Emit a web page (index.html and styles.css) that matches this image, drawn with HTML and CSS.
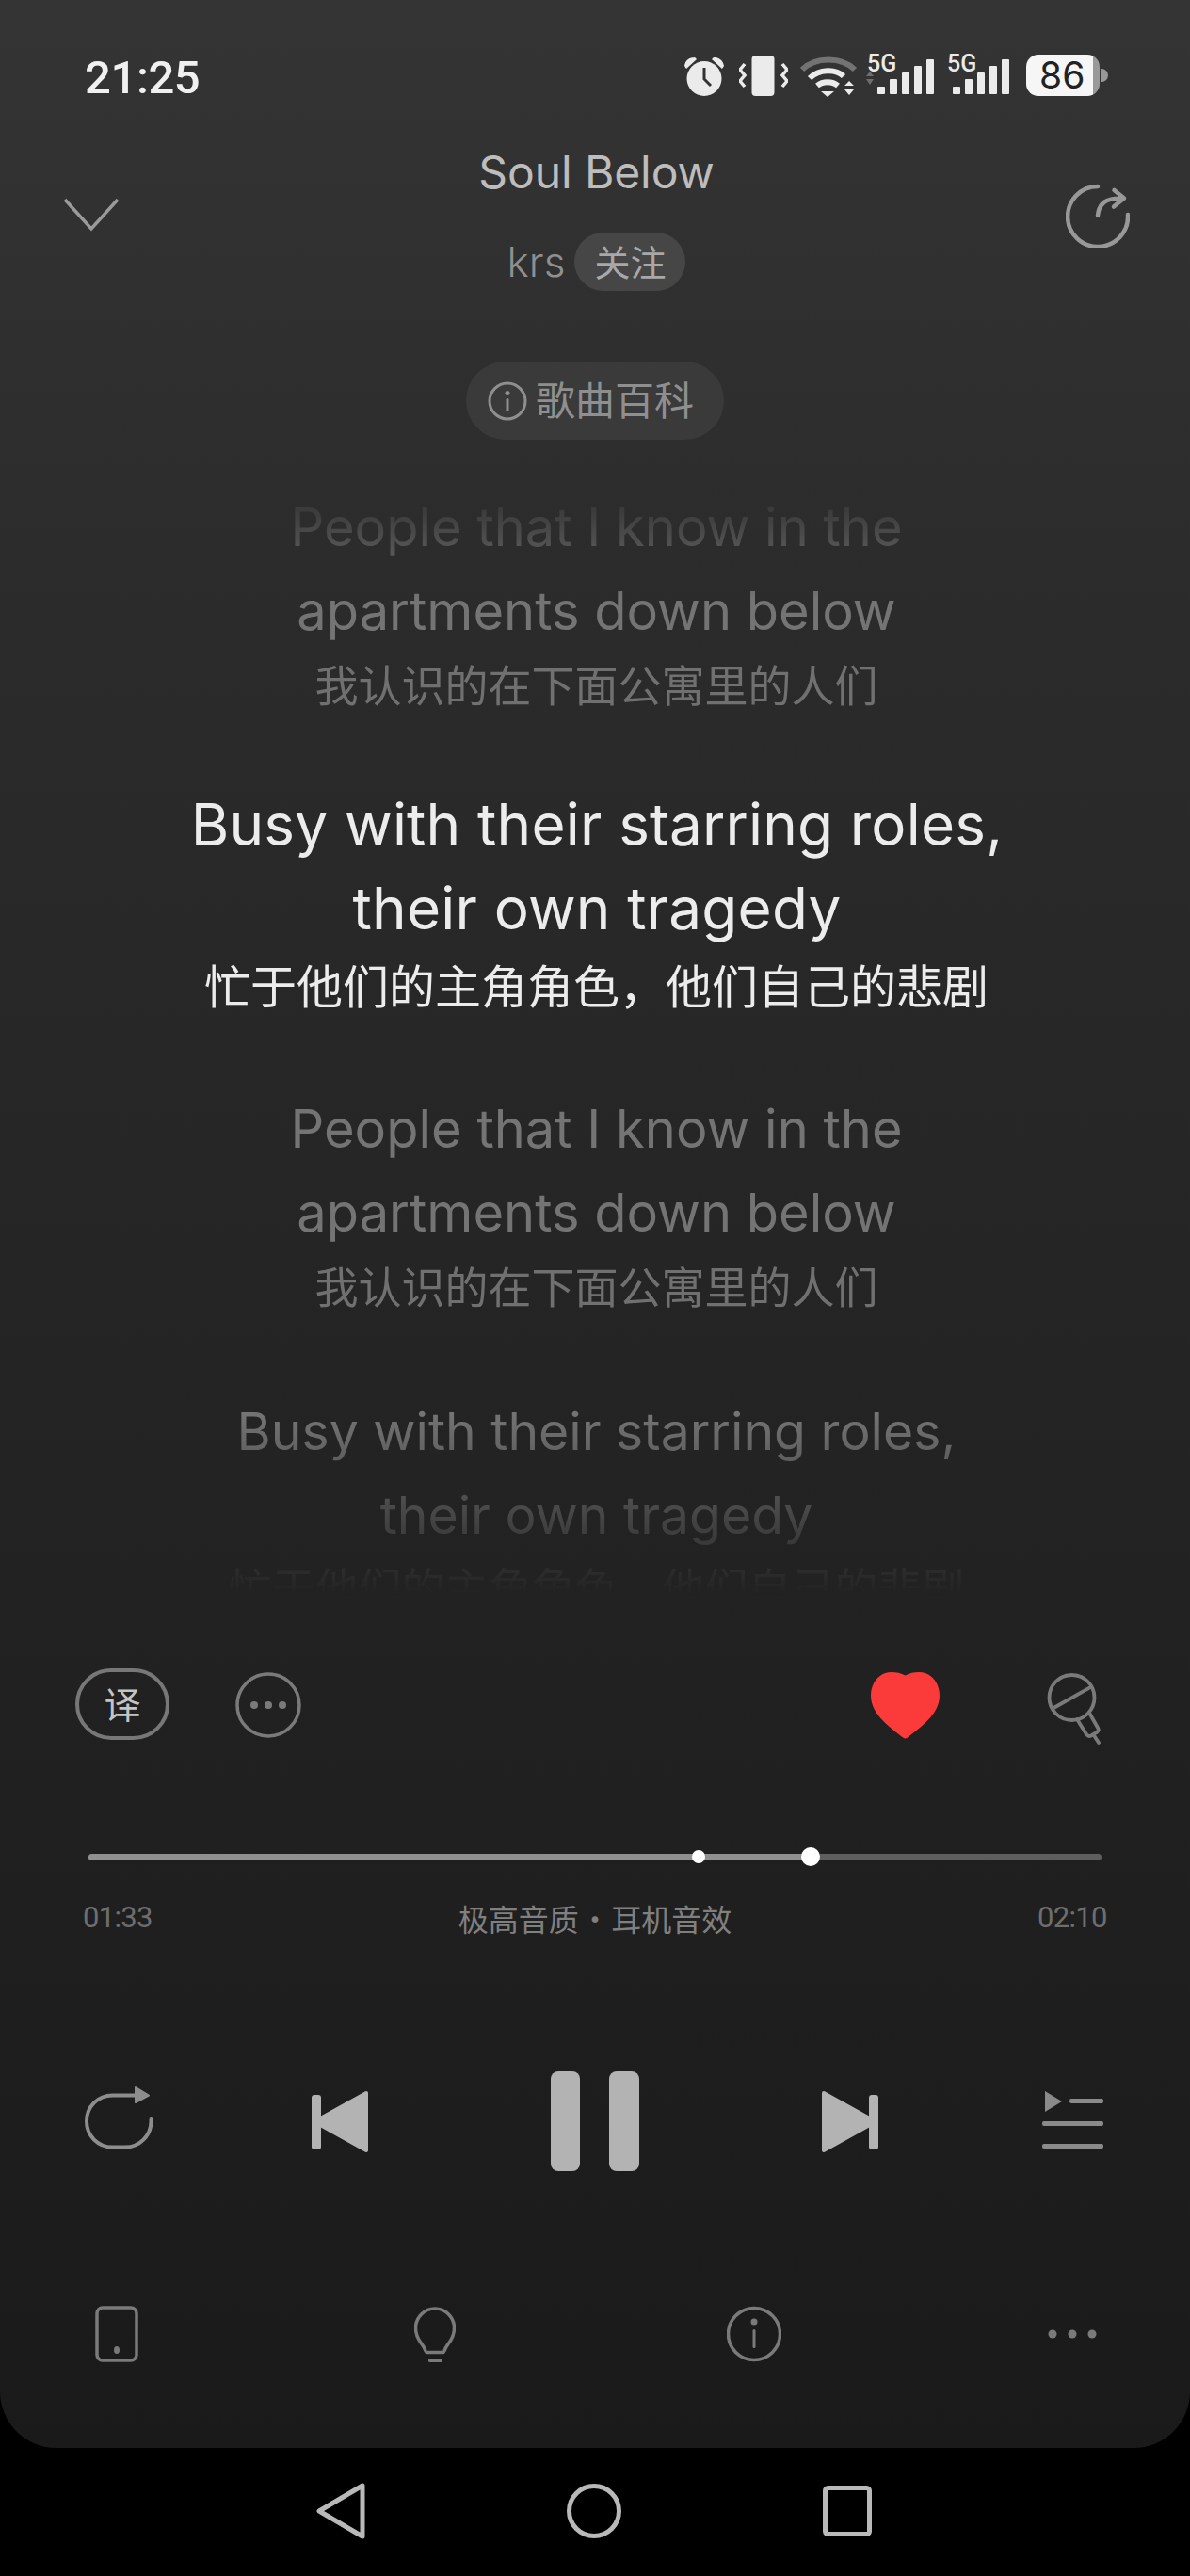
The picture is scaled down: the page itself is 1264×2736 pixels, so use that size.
FILE: index.html
```html
<!DOCTYPE html>
<html lang="zh">
<head>
<meta charset="utf-8">
<title>Soul Below</title>
<link rel="stylesheet" href="styles.css">
</head>
<body>
<div class="screen">
  <main class="player">
    <div class="status">
      <span class="clock">21:25</span>
      <div class="status-icons">
        <svg class="i-alarm" width="44" height="42" viewBox="0 0 44 42"><circle cx="22" cy="23.500" r="18.500" fill="#ebebeb"/><path d="M22 12V24L29 31" fill="none" stroke="#333" stroke-width="3"/><path d="M1 10C2 4 6 1 12 1L14 3 3 13ZM43 10C42 4 38 1 32 1L30 3 41 13Z" fill="#ebebeb"/></svg>
        <svg class="i-vib" width="52" height="43" viewBox="0 0 52 43"><rect x="13.500" y="0" width="24" height="43" rx="4" fill="#ebebeb"/><path d="M6 9L1 15 6 21 1 27 6 33M46 9L51 15 46 21 51 27 46 33" fill="none" stroke="#ebebeb" stroke-width="3.500"/></svg>
        <svg class="i-wifi" width="60" height="44" viewBox="0 0 60 44"><path d="M2 14C16 0 44 0 58 14" fill="none" stroke="#737373" stroke-width="6"/><path d="M10 23C20 13 38 13 46 21" fill="none" stroke="#ebebeb" stroke-width="6"/><path d="M18 31C24 26 34 26 40 31" fill="none" stroke="#ebebeb" stroke-width="6"/><path d="M22 37H36L29 43Z" fill="#ebebeb"/><path d="M47 31L52 26 57 31ZM47 35H57L52 41Z" fill="#ebebeb"/></svg>
        <div class="sim">
          <span class="sim-label">5G</span>
          <svg class="sim-bars" width="72" height="37" viewBox="0 0 72 37"><path d="M0 18L4 13 8 18ZM0 21H8L4 27Z" fill="#6e6e6e"/><g fill="#ebebeb"><rect x="12" y="29" width="8" height="8" rx="1"/><rect x="25" y="21" width="8" height="16" rx="1"/><rect x="38" y="14" width="8" height="23" rx="1"/><rect x="51" y="7" width="8" height="30" rx="1"/><rect x="64" y="0" width="8" height="37" rx="1"/></g></svg>
        </div>
        <div class="sim sim-b">
          <span class="sim-label">5G</span>
          <svg class="sim-bars" width="60" height="37" viewBox="0 0 60 37"><g fill="#ebebeb"><rect x="0" y="29" width="8" height="8" rx="1"/><rect x="13" y="21" width="8" height="16" rx="1"/><rect x="26" y="14" width="8" height="23" rx="1"/><rect x="39" y="7" width="8" height="30" rx="1"/><rect x="52" y="0" width="8" height="37" rx="1"/></g></svg>
        </div>
        <div class="battery"><div class="battery-body"><span class="battery-num">86</span></div><span class="battery-nub"></span></div>
      </div>
    </div>

    <header class="header">
      <svg class="chevron" width="60" height="36" viewBox="0 0 60 36"><path d="M2 2L30 33 58 2" fill="none" stroke="#9a9a9a" stroke-width="3.500"/></svg>
      <div class="song">
        <h1 class="song-title">Soul Below</h1>
        <div class="artist-row"><span class="artist">krs</span><span class="follow">关注</span></div>
      </div>
      <svg class="share" width="68" height="68" viewBox="0 0 68 68"><path d="M34 3A32 32 0 1 0 66 33" fill="none" stroke="#989898" stroke-width="4.500" stroke-linecap="round"/><path d="M34 34C35 23 41 17 52 16H60M51.500 7L62 15.500 51 24.500" fill="none" stroke="#989898" stroke-width="4.500" stroke-linecap="round" stroke-linejoin="round"/></svg>
    </header>

    <div class="wiki-wrap">
      <div class="wiki">
        <svg width="42" height="42" viewBox="0 0 42 42"><circle cx="21" cy="21" r="19" fill="none" stroke="#8f8f8f" stroke-width="3"/><circle cx="21" cy="12.500" r="2.500" fill="#8f8f8f"/><rect x="19.500" y="18" width="3" height="14" rx="1.500" fill="#8f8f8f"/></svg>
        <span class="wiki-text">歌曲百科</span>
      </div>
    </div>

    <section class="lyrics">
      <div class="lyric lyric-first">
        <p class="en">People that I know in the</p>
        <p class="en">apartments down below</p>
        <p class="zh">我认识的在下面公寓里的人们</p>
      </div>
      <div class="lyric lyric-on">
        <p class="en">Busy with their starring roles,</p>
        <p class="en">their own tragedy</p>
        <p class="zh">忙于他们的主角角色，他们自己的悲剧</p>
      </div>
      <div class="lyric">
        <p class="en">People that I know in the</p>
        <p class="en">apartments down below</p>
        <p class="zh">我认识的在下面公寓里的人们</p>
      </div>
      <div class="lyric lyric-next">
        <p class="en">Busy with their starring roles,</p>
        <p class="en">their own tragedy</p>
        <p class="zh">忙于他们的主角角色，他们自己的悲剧</p>
      </div>
    </section>

    <div class="actions">
      <span class="translate">译</span>
      <svg class="more" width="70" height="70" viewBox="0 0 70 70"><circle cx="35" cy="35" r="33" fill="none" stroke="#7a7a7a" stroke-width="3.500"/><circle cx="20" cy="35" r="4" fill="#7a7a7a"/><circle cx="35" cy="35" r="4" fill="#7a7a7a"/><circle cx="50" cy="35" r="4" fill="#7a7a7a"/></svg>
      <svg class="heart" width="73" height="71" viewBox="0 0 73 71"><path d="M36.500 3.500C41 1 46 0 51 0C64 0 73 11 73 25C73 46 50 60 39 69.500Q36.500 71.500 34 69.500C23 60 0 46 0 25C0 11 9 0 22 0C27 0 32 1 36.500 3.500Z" fill="#fb3a3a"/></svg>
      <svg class="mic" width="58" height="76" viewBox="0 0 58 76"><circle cx="26.500" cy="26" r="24" fill="none" stroke="#7a7a7a" stroke-width="3.800"/><path d="M7.300 37L47 14.700" stroke="#7a7a7a" stroke-width="3.800"/><path d="M32 49L42 65Q44 68 47 66.500L53 63Q56 61 54 58L45.500 43M50.500 67L55 74" fill="none" stroke="#7a7a7a" stroke-width="3.800" stroke-linecap="round"/></svg>
    </div>

    <div class="progress">
      <div class="track"><div class="played" style="width:71.3%"></div></div>
      <span class="dot" style="left:60.2%"></span>
      <span class="thumb" style="left:71.3%"></span>
    </div>

    <div class="times">
      <span class="time">01:33</span>
      <span class="quality">极高音质 · 耳机音效</span>
      <span class="time">02:10</span>
    </div>

    <div class="transport">
      <svg class="t-repeat" width="72" height="67" viewBox="0 0 72 67"><path d="M55 9.500H29.500C14 9.500 2 21.500 2 37C2 52.500 14 64.500 29.500 64.500H43C58 64.500 70.500 52.500 70.500 37V35" fill="none" stroke="#8d8d8d" stroke-width="4" stroke-linecap="round"/><path d="M54 1L68 9.500 54 17Z" fill="#8d8d8d" stroke="#8d8d8d" stroke-width="2" stroke-linejoin="round"/></svg>
      <svg class="t-prev" width="61" height="67" viewBox="0 0 61 67"><rect x="0" y="5" width="10" height="58" rx="3" fill="#b3b3b3"/><path d="M58 3L3 33.500 58 64Z" fill="#b3b3b3" stroke="#b3b3b3" stroke-width="4" stroke-linejoin="round"/></svg>
      <svg class="t-pause" width="94" height="106" viewBox="0 0 94 106"><rect x="0" y="0" width="31" height="106" rx="8" fill="#b3b3b3"/><rect x="62" y="0" width="32" height="106" rx="8" fill="#b3b3b3"/></svg>
      <svg class="t-next" width="61" height="67" viewBox="0 0 61 67"><rect x="51" y="5" width="10" height="58" rx="3" fill="#b3b3b3"/><path d="M3 3L58 33.500 3 64Z" fill="#b3b3b3" stroke="#b3b3b3" stroke-width="4" stroke-linejoin="round"/></svg>
      <svg class="t-queue" width="65" height="64" viewBox="0 0 65 64"><path d="M3 0L21 11 3 22Z" fill="#8a8a8a"/><rect x="29" y="8" width="36" height="5" rx="2" fill="#8a8a8a"/><rect x="0" y="32" width="65" height="5" rx="2" fill="#8a8a8a"/><rect x="0" y="56" width="65" height="5" rx="2" fill="#8a8a8a"/></svg>
    </div>

    <div class="toolbar">
      <svg class="b-phone" width="46" height="60" viewBox="0 0 46 60"><rect x="2" y="2" width="42" height="56" rx="6" fill="none" stroke="#7a7a7a" stroke-width="3.500"/><ellipse cx="23" cy="47" rx="3" ry="4" fill="#7a7a7a"/></svg>
      <svg class="b-bulb" width="44" height="60" viewBox="0 0 44 60"><path d="M14 49.500H30Q31.500 49.500 32 48C33.500 43 36 41 38.500 37C41 33 42.500 29 42.500 23.500C42.500 12 33 3 22 3C11 3 1.500 12 1.500 23.500C1.500 29 3 33 5.500 37C8 41 10.500 43 12 48Q12.500 49.500 14 49.500Z" fill="none" stroke="#7a7a7a" stroke-width="3.500"/><rect x="15" y="56" width="15" height="4" rx="1.500" fill="#7a7a7a"/></svg>
      <svg class="b-info" width="58" height="60" viewBox="0 0 58 60"><circle cx="29" cy="30" r="27.500" fill="none" stroke="#7a7a7a" stroke-width="3.500"/><circle cx="29" cy="17" r="3.500" fill="#7a7a7a"/><rect x="27.500" y="25" width="3" height="20" rx="1.500" fill="#7a7a7a"/></svg>
      <svg class="b-dots" width="52" height="10" viewBox="0 0 52 10"><circle cx="5" cy="5" r="4.500" fill="#7a7a7a"/><circle cx="26" cy="5" r="4.500" fill="#7a7a7a"/><circle cx="47" cy="5" r="4.500" fill="#7a7a7a"/></svg>
    </div>
  </main>

  <nav class="navbar">
    <svg class="n-back" width="52" height="60" viewBox="0 0 52 60"><path d="M49 3V57L3 30Z" fill="none" stroke="#b9b9b9" stroke-width="5" stroke-linejoin="round"/></svg>
    <svg class="n-home" width="58" height="58" viewBox="0 0 58 58"><circle cx="29" cy="29" r="26.500" fill="none" stroke="#b9b9b9" stroke-width="5"/></svg>
    <svg class="n-recent" width="52" height="54" viewBox="0 0 52 54"><rect x="2.500" y="2.500" width="47" height="49" rx="3" fill="none" stroke="#b9b9b9" stroke-width="5"/></svg>
  </nav>
</div>
</body>
</html>
```
FILE: styles.css
```css
* { box-sizing: border-box; margin: 0; padding: 0; }
html, body { background: #000; }
body { font-family: Inter, "Noto Sans CJK SC", sans-serif; }

.screen { width: 1264px; height: 2736px; background: #000; display: flex; flex-direction: column; overflow: hidden; }
.player {
  height: 2600px;
  border-radius: 0 0 60px 60px / 0 0 60px 60px;
  background: linear-gradient(180deg, #343434 0%, #2b2b2b 25%, #232323 60%, #1a1a1a 100%);
  display: flex;
  flex-direction: column;
}

/* status bar */
.status { height: 153px; padding: 58px 87px 0 90px; display: flex; justify-content: space-between; align-items: flex-start; }
.clock { font: 500 49px/50px Roboto, sans-serif; letter-spacing: -0.4px; color: #f0f0f0; }
.status-icons { display: flex; align-items: flex-start; margin-top: 0; }
.i-alarm { margin-top: 2px; }
.i-vib { margin-left: 15px; margin-top: 1px; }
.i-wifi { margin-left: 13px; margin-top: 2px; }
.sim { position: relative; width: 72px; height: 43px; margin-left: 10px; margin-top: 5px; }
.sim-b { width: 60px; margin-left: 20px; }
.sim-label { position: absolute; left: 1px; top: -8px; font: 500 25px/26px Roboto, sans-serif; color: #ebebeb; }
.sim-bars { position: absolute; left: 0; top: 0; }
.sim-b .sim-label { left: -6px; }
.battery { display: flex; align-items: center; margin-left: 18px; }
.battery-body { width: 78px; height: 44px; border-radius: 13px; background: linear-gradient(90deg, #f6f6f6 0, #f6f6f6 71px, #999 71px); }
.battery-num { display: block; font: 400 39px/44px Inter, sans-serif; color: #222; padding-left: 14px; }
.battery-nub { width: 8px; height: 14px; background: #999; border-radius: 0 7px 7px 0; margin-left: 1px; }

/* header */
.header { display: grid; grid-template-columns: 1fr auto 1fr; padding: 0 64px 0 67px; }
.chevron { margin-top: 57px; }
.share { margin-top: 42px; justify-self: end; }
.song { display: flex; flex-direction: column; align-items: center; }
.song-title { font: 400 48px/60px Inter, sans-serif; letter-spacing: -0.1px; color: #bdbdbd; }
.artist-row { display: flex; align-items: center; gap: 10px; margin-top: 34px; height: 62px; }
.artist { font: 300 44px/60px Inter, sans-serif; color: #8f8f8f; }
.follow { height: 62px; padding: 0 21px; border-radius: 31px; background: #464646; font: 400 38px/59px "Noto Sans CJK SC", sans-serif; color: #a8a8a8; }

.wiki-wrap { display: flex; justify-content: center; margin-top: 75px; }
.wiki { width: 274px; height: 83px; border-radius: 42px; background: #3a3a3a; display: flex; align-items: center; gap: 9px; padding-left: 23px; }
.wiki-text { margin-bottom: 6px; font: 400 42px/78px "Noto Sans CJK SC", sans-serif; color: #8f8f8f; }

/* lyrics */
.lyrics {
  height: 1225px;
  margin-top: 49px;
  text-align: center;
  -webkit-mask-image: linear-gradient(180deg, transparent 0, #000 120px, #000 985px, transparent 1178px);
  mask-image: linear-gradient(180deg, transparent 0, #000 120px, #000 985px, transparent 1178px);
}
.lyric { margin-bottom: 78px; }
.lyric-first { margin-bottom: 73px; }
.lyric-on { margin-bottom: 74px; }
.en { padding-left: 3px; font-weight: 400; font-size: 56px; line-height: 89px; color: #747474; }
.zh { margin-top: -1px; padding-left: 3px; font: 400 46px/65px "Noto Sans CJK SC", sans-serif; color: #707070; }
.lyric-on .en { padding-left: 4px; font-size: 62px; letter-spacing: 0.2px; color: #ececec; }
.lyric-on .zh { font-size: 49px; line-height: 73px; color: #ececec; }
.lyric-next .en { font-size: 55.300px; }

/* actions */
.actions { display: flex; align-items: flex-start; height: 79px; margin-top: 31px; padding-left: 80px; }
.translate { width: 100px; height: 76px; border: 4px solid #777; border-radius: 38px; font: 400 39px/65px "Noto Sans CJK SC", sans-serif; color: #c4c4c4; text-align: center; }
.more { margin-left: 70px; margin-top: 4px; }
.heart { margin-left: 605px; margin-top: 4px; }
.mic { margin-left: 114px; margin-top: 5px; }

/* progress */
.progress { position: relative; height: 20px; margin: 111px 94px 0; display: flex; align-items: center; }
.track { width: 100%; height: 7px; border-radius: 4px; background: #5e5e5e; overflow: hidden; }
.played { height: 100%; background: #8f8f8f; }
.dot { position: absolute; top: 3px; width: 14px; height: 14px; margin-left: -7px; border-radius: 50%; background: #fff; }
.thumb { position: absolute; top: 0; width: 20px; height: 20px; margin-left: -10px; border-radius: 50%; background: #fff; }

.times { display: flex; justify-content: space-between; align-items: center; height: 44px; margin-top: 33px; padding: 0 88px; }
.time { font: 400 31px/42px Roboto, sans-serif; width: 74px; letter-spacing: -0.7px; color: #6e6e6e; }
.quality { font: 400 32px/42px "Noto Sans CJK SC", sans-serif; word-spacing: -6px; color: #808080; white-space: pre; }

/* transport */
.transport { display: flex; align-items: center; height: 106px; margin-top: 141px; padding-left: 90px; }
.t-prev { margin-left: 169px; }
.t-pause { margin-left: 193px; }
.t-next { margin-left: 193px; }
.t-queue { margin-left: 174px; }
.t-repeat { margin-bottom: 7px; }

/* bottom toolbar */
.toolbar { display: flex; align-items: center; height: 60px; margin-top: 143px; padding-left: 101px; }
.b-bulb { margin-left: 293px; }
.b-info { margin-left: 288px; }
.b-dots { margin-left: 283px; }

/* nav */
.navbar { height: 136px; display: flex; align-items: center; padding-left: 336px; padding-bottom: 2px; }
.n-home { margin-left: 214px; }
.n-recent { margin-left: 214px; }
```
